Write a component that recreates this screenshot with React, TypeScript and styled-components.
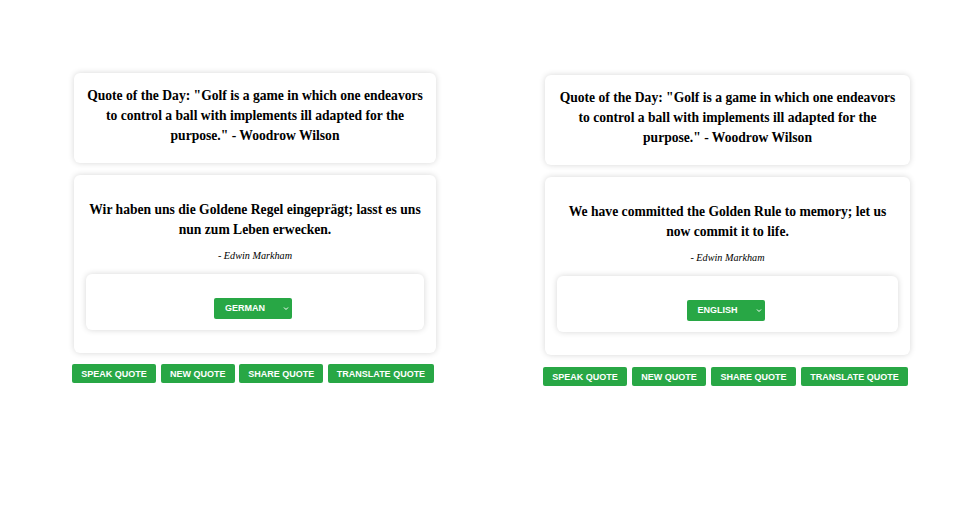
import React from "react";
import styled, { createGlobalStyle } from "styled-components";

const Global = createGlobalStyle`
  html, body { margin: 0; padding: 0; background: #ffffff; }
  body { font-family: "Liberation Serif", serif; }
`;

const serif = `"Liberation Serif", "Times New Roman", Times, serif`;
const sans = `"Liberation Sans", Arial, Helvetica, sans-serif`;

const Page = styled.div`
  display: flex;
  align-items: flex-start;
  gap: 107px;
  padding: 73px 0 0 72px;
  min-height: 525px;
  box-sizing: border-box;
`;

const Column = styled.div<{ $w: number; $offset: number }>`
  width: ${(p) => p.$w}px;
  margin-top: ${(p) => p.$offset}px;
  display: flex;
  flex-direction: column;
`;

const Card = styled.div`
  margin-left: 2px;
  background: #ffffff;
  border-radius: 6px;
  box-shadow: 0 0 6px rgba(0, 0, 0, 0.16);
  text-align: center;
  box-sizing: border-box;
`;

const DayCard = styled(Card)`
  padding: 13px 12px 17px;
`;

const TranslateCard = styled(Card)`
  margin-top: 12px;
  padding: 25px 12px 23px;
`;

const QuoteLine = styled.p`
  margin: 0;
  font-family: ${serif};
  font-weight: 700;
  font-size: 13.6px;
  line-height: 20px;
  color: #000;
`;

const Author = styled.p`
  margin: 9px 0 0;
  font-family: ${serif};
  font-style: italic;
  font-size: 10.2px;
  line-height: 14px;
  color: #000;
`;

const SelectBox = styled.div`
  margin-top: 11px;
  border-radius: 6px;
  box-shadow: 0 0 6px rgba(0, 0, 0, 0.16);
  padding: 24px 0 11px;
  display: flex;
  justify-content: center;
`;

const LangSelect = styled.div`
  position: relative;
  width: 78px;
  height: 21px;
  margin-right: 4px;
  background: #28a745;
  border-radius: 2px;
  color: #fff;
  font-family: ${sans};
  font-weight: bold;
  font-size: 9px;
  line-height: 21px;
  box-sizing: border-box;
  padding-left: 11px;
  text-align: left;
`;

const Chevron = styled.svg`
  position: absolute;
  right: 3px;
  top: 8px;
`;

const ButtonRow = styled.div<{ $top: number; $gap: number }>`
  margin-top: ${(p) => p.$top}px;
  display: flex;
  gap: ${(p) => p.$gap}px;
`;

const Button = styled.button<{ $w: number }>`
  width: ${(p) => p.$w}px;
  height: 19px;
  padding: 0;
  border: none;
  border-radius: 2px;
  background: #28a745;
  color: #fff;
  font-family: ${sans};
  font-weight: bold;
  font-size: 9px;
  cursor: pointer;
`;

type PanelProps = {
  width: number;
  offset: number;
  rowTop: number;
  rowGap: number;
  quote: string;
  lang: string;
  buttons: number[];
};

const labels = ["SPEAK QUOTE", "NEW QUOTE", "SHARE QUOTE", "TRANSLATE QUOTE"];

function Panel({ width, offset, rowTop, rowGap, quote, lang, buttons }: PanelProps) {
  return (
    <Column $w={width} $offset={offset}>
      <DayCard>
        <QuoteLine>
          Quote of the Day: "Golf is a game in which one endeavors to control a ball with
          implements ill adapted for the purpose." - Woodrow Wilson
        </QuoteLine>
      </DayCard>
      <TranslateCard>
        <QuoteLine>{quote}</QuoteLine>
        <Author>- Edwin Markham</Author>
        <SelectBox>
          <LangSelect>
            {lang}
            <Chevron width="6" height="5" viewBox="0 0 6 5">
              <path d="M1 1.5 L3 3.5 L5 1.5" stroke="#fff" strokeWidth="1" fill="none" />
            </Chevron>
          </LangSelect>
        </SelectBox>
      </TranslateCard>
      <ButtonRow $top={rowTop} $gap={rowGap}>
        {labels.map((l, i) => (
          <Button key={l} $w={buttons[i]}>
            {l}
          </Button>
        ))}
      </ButtonRow>
    </Column>
  );
}

export default function App() {
  return (
    <>
      <Global />
      <Page>
        <Panel
          width={364}
          offset={0}
          rowTop={11}
          rowGap={4.67}
          quote="Wir haben uns die Goldene Regel eingeprägt; lasst es uns nun zum Leben erwecken."
          lang="GERMAN"
          buttons={[84, 74, 84, 106]}
        />
        <Panel
          width={367}
          offset={2}
          rowTop={12}
          rowGap={5}
          quote="We have committed the Golden Rule to memory; let us now commit it to life."
          lang="ENGLISH"
          buttons={[84, 74, 85, 107]}
        />
      </Page>
    </>
  );
}
